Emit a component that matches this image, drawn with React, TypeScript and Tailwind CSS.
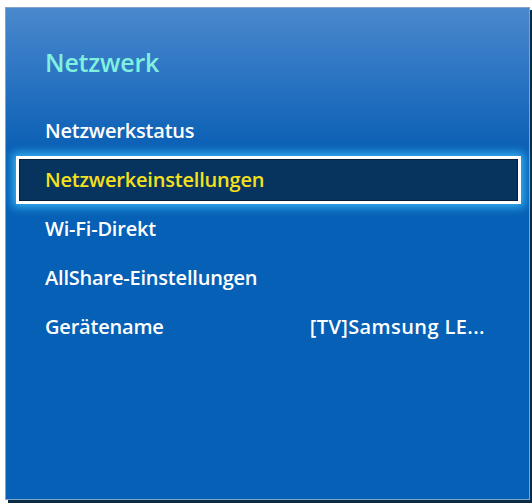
import React from "react";

const items = [
  { label: "Netzwerkstatus" },
  { label: "Netzwerkeinstellungen", selected: true },
  { label: "Wi-Fi-Direkt" },
  { label: "AllShare-Einstellungen" },
  { label: "Gerätename", value: "[TV]Samsung LE..." },
];

export default function App() {
  return (
    <div className="w-[532px] h-[503px] bg-white relative overflow-hidden" style={{ fontFamily: '"Open Sans", "Noto Sans", sans-serif' }}>
      <div className="ml-[5px] mt-[7px] w-[525px] h-[493px] border border-[#7fa3c9] shadow-[3px_3px_0_#0b2a45] bg-[linear-gradient(to_bottom,#4a88cc_0px,#2f77c4_60px,#0b60b5_140px,#0660b6_200px,#0660b6_100%)] flex flex-col">
        <div className="h-[98px] pl-[39px] pt-[37px]">
          <div className="text-[25px] leading-[34px] font-semibold text-[#80f0df] tracking-[-0.2px]">Netzwerk</div>
        </div>
        <div className="flex flex-col">
          {items.map((it) => (
            <div key={it.label} className="h-[49px] flex items-center">
              {it.selected ? (
                <div className="ml-[10px] mr-[8px] h-[48px] flex-1 flex items-center border-[3px] border-white bg-[#06345f] shadow-[0_0_9px_3px_#38b6f5,inset_0_0_0_1px_#02203d] pl-[26px]">
                  <span className="text-[20px] font-semibold text-[#f4e01c] tracking-[-0.2px]">{it.label}</span>
                </div>
              ) : (
                <div className="flex-1 flex items-center pl-[39px] pr-[44px] justify-between">
                  <span className="text-[20px] font-semibold text-white tracking-[-0.2px]">{it.label}</span>
                  {it.value && <span className="text-[20px] font-semibold text-white tracking-[0.4px]">{it.value}</span>}
                </div>
              )}
            </div>
          ))}
        </div>
      </div>
    </div>
  );
}
